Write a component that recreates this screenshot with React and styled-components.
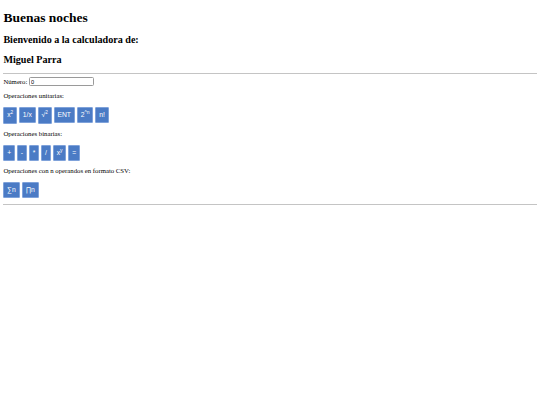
import React from "react";
import styled, { createGlobalStyle } from "styled-components";

const Global = createGlobalStyle`
  html, body { background: #ffffff; }
  body {
    margin: 3.375px;
    font-family: "Liberation Serif", "Times New Roman", serif;
    font-size: 6.75px;
    color: #000000;
  }
`;

const Title = styled.h1`
  font-size: 13.5px;
  font-weight: bold;
  margin: 6.5px 0 8px;
`;

const Subtitle = styled.h2`
  font-size: 10.125px;
  font-weight: bold;
  margin: 8.4px 0;
`;

const Rule = styled.hr`
  border: none;
  border-top: 1px solid #c4c4c4;
  height: 0;
  margin: ${(p) => (p.$end ? "5.9px" : "3.375px")} 0 3.375px;
`;

const Field = styled.div`
  display: flex;
  align-items: center;
  gap: 1.7px;
  height: 8.2px;
`;

const NumberInput = styled.input`
  box-sizing: border-box;
  width: 64.8px;
  height: 8.9px;
  padding: 0 1px;
  border: 1px solid #9a9a9a;
  border-radius: 1.5px;
  font-family: "Liberation Sans", Arial, sans-serif;
  font-size: 5.6px;
  color: #000;
  outline: none;
`;

const Label = styled.p`
  margin: 6.75px 0;
  line-height: 7.76px;
`;

const ButtonRow = styled.div`
  display: flex;
  align-items: baseline;
  gap: 2.1px;
`;

const CalcButton = styled.button`
  box-sizing: border-box;
  background: #4b7bc5;
  border: 1px solid #7fa2da;
  border-radius: 1px;
  color: #ffffff;
  font-family: "Liberation Sans", Arial, sans-serif;
  font-size: 6.75px;
  line-height: 7.76px;
  padding: 3px 2.8px;
  margin: 0;
  cursor: pointer;

  sup {
    font-size: 5px;
    line-height: 0;
    vertical-align: 2.6px;
  }
`;

/* small raised figure that does not grow the button */
const Raised = styled.span`
  font-size: 4.6px;
  position: relative;
  top: -2.4px;
`;

const unary = [
  <>x<Raised>2</Raised></>,
  <>1/x</>,
  <>√<Raised>2</Raised></>,
  <>ENT</>,
  <>2<sup>^n</sup></>,
  <>n!</>,
];

const binary = [
  <>+</>,
  <>-</>,
  <>*</>,
  <>/</>,
  <>x<sup>y</sup></>,
  <>=</>,
];

const csv = [<>∑n</>, <>∏n</>];

function Buttons({ items }) {
  return (
    <ButtonRow>
      {items.map((content, i) => (
        <CalcButton key={i} type="button">
          {content}
        </CalcButton>
      ))}
    </ButtonRow>
  );
}

export default function App() {
  return (
    <>
      <Global />
      <Title>Buenas noches</Title>
      <Subtitle>Bienvenido a la calculadora de:</Subtitle>
      <Subtitle>Miguel Parra</Subtitle>
      <Rule />
      <Field>
        <span>Número:</span>
        <NumberInput type="text" defaultValue="0" />
      </Field>
      <Label>Operaciones unitarias:</Label>
      <Buttons items={unary} />
      <Label>Operaciones binarias:</Label>
      <Buttons items={binary} />
      <Label>Operaciones con n operandos en formato CSV:</Label>
      <Buttons items={csv} />
      <Rule $end />
    </>
  );
}
